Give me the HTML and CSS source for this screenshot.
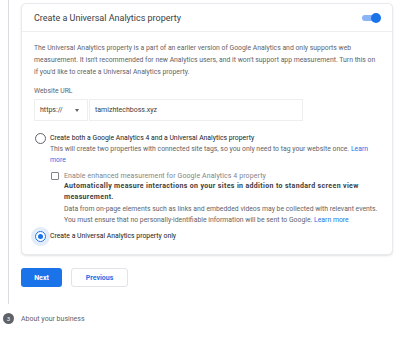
FILE: index.html
```html
<!DOCTYPE html>
<html>
<head>
<meta charset="utf-8">
<link rel="stylesheet" href="styles.css">
</head>
<body>
<div class="page">
  <div class="rail"><div class="line"></div></div>
  <div class="main">
    <div class="card">
      <div class="card-head">
        <span class="title">Create a Universal Analytics property</span>
        <span class="toggle"><span class="track"></span><span class="knob"></span></span>
      </div>
      <div class="card-body">
        <p class="intro">The Universal Analytics property is a part of an earlier version of Google Analytics and only supports web measurement. It isn't recommended for new Analytics users, and it won't support app measurement. Turn this on if you'd like to create a Universal Analytics property.</p>
        <div class="label">Website URL</div>
        <div class="url-row">
          <div class="select"><span>https://</span><span class="caret"></span></div>
          <div class="input">tamizhtechboss.xyz</div>
        </div>
        <div class="option first">
          <span class="radio"></span>
          <div class="opt-text">
            <div class="opt-title">Create both a Google Analytics 4 and a Universal Analytics property</div>
            <div class="opt-desc">This will create two properties with connected site tags, so you only need to tag your website once. <span class="link">Learn more</span></div>
            <div class="check-row">
              <span class="checkbox"></span>
              <span class="check-label">Enable enhanced measurement for Google Analytics 4 property</span>
            </div>
            <div class="sub">
              <div class="bold">Automatically measure interactions on your sites in addition to standard screen view measurement.</div>
              <div class="opt-desc">Data from on-page elements such as links and embedded videos may be collected with relevant events. You must ensure that no personally-identifiable information will be sent to Google. <span class="link">Learn more</span></div>
            </div>
          </div>
        </div>
        <div class="option second">
          <span class="radio checked"><span class="dot"></span></span>
          <div class="opt-title">Create a Universal Analytics property only</div>
        </div>
      </div>
    </div>
    <div class="actions">
      <button class="btn primary">Next</button>
      <button class="btn secondary">Previous</button>
    </div>
  </div>
</div>
<div class="step">
  <span class="num">3</span>
  <span class="step-label">About your business</span>
</div>
</body>
</html>
```
FILE: styles.css
```css
* { box-sizing: border-box; }
body {
  margin: 0;
  background: #fff;
  font-family: Roboto, "Liberation Sans", Arial, sans-serif;
  color: #5f6368;
  width: 400px;
  height: 338px;
  overflow: hidden;
}
.page {
  display: flex;
}
.rail {
  width: 21px;
  flex: none;
  display: flex;
  justify-content: center;
  padding-right: 4px;
}
.line {
  width: 1px;
  background: #dadce0;
  height: 304px;
}
.main {
  flex: 1;
  padding-right: 7px;
  padding-top: 3px;
}
.card {
  border: 1px solid #e8eaed;
  border-radius: 5px;
  box-shadow: 0 1px 2px rgba(60,64,67,0.15);
  background: #fff;
}
.card-head {
  height: 28px;
  display: flex;
  align-items: center;
  justify-content: space-between;
  padding: 0 11px 0 12px;
  border-bottom: 1px solid #eceef0;
}
.title {
  font-size: 9px;
  color: #3c4043;
}
.toggle {
  position: relative;
  width: 20px;
  height: 10px;
  display: inline-block;
}
.track {
  position: absolute;
  left: 1px;
  top: 2px;
  width: 16px;
  height: 6px;
  border-radius: 3px;
  background: #8ab4f8;
}
.knob {
  position: absolute;
  right: 0;
  top: 0;
  width: 10px;
  height: 10px;
  border-radius: 50%;
  background: #1a73e8;
}
.card-body {
  padding: 10px 12px 12px 12px;
}
.intro {
  margin: 0;
  font-size: 6.85px;
  line-height: 12px;
  color: #5f6368;
}
.label {
  margin-top: 8px;
  font-size: 6.85px;
  line-height: 10px;
  color: #5f6368;
}
.url-row {
  display: flex;
  margin-top: 3px;
  gap: 1px;
}
.select {
  width: 54px;
  height: 22px;
  border: 1px solid #eceef0;
  display: flex;
  align-items: center;
  justify-content: space-between;
  padding: 0 8px 0 5px;
  font-size: 7px;
  color: #3c4043;
}
.caret {
  width: 0;
  height: 0;
  border-left: 2.5px solid transparent;
  border-right: 2.5px solid transparent;
  border-top: 3px solid #5f6368;
}
.input {
  width: 214px;
  height: 22px;
  border: 1px solid #eceef0;
  display: flex;
  align-items: center;
  padding-left: 5px;
  font-size: 7px;
  color: #3c4043;
}
.option {
  display: flex;
  align-items: flex-start;
}
.option.first {
  margin-top: 12px;
}
.option.second {
  margin-top: 5px;
  align-items: center;
}
.radio {
  flex: none;
  width: 11px;
  height: 11px;
  border: 1.5px solid #5f6368;
  border-radius: 50%;
  margin-left: 1px;
  margin-right: 4px;
  display: flex;
  align-items: center;
  justify-content: center;
}
.radio.checked {
  border-color: #1a73e8;
  box-shadow: 0 0 0 4px #e3ecfb;
}
.dot {
  width: 5px;
  height: 5px;
  border-radius: 50%;
  background: #1a73e8;
}
.opt-title {
  font-size: 6.85px;
  line-height: 11px;
  color: #202124;
}
.opt-desc {
  font-size: 6.85px;
  line-height: 11px;
  color: #5f6368;
}
.link { color: #1a73e8; }
.check-row {
  display: flex;
  align-items: center;
  margin-top: 6px;
  margin-left: 1px;
}
.checkbox {
  width: 8px;
  height: 8px;
  border: 1px solid #80868b;
  border-radius: 1px;
  margin-right: 5px;
}
.check-label {
  font-size: 7px;
  letter-spacing: 0.1px;
  color: #80868b;
}
.sub {
  padding-left: 14px;
  margin-top: 1px;
}
.bold {
  font-size: 7px;
  font-weight: bold;
  letter-spacing: 0.35px;
  line-height: 11px;
  color: #3c4043;
  margin-bottom: 1px;
}
.actions {
  display: flex;
  gap: 9px;
  margin-top: 13px;
}
.btn {
  height: 19px;
  border-radius: 3px;
  font-family: Roboto, "Liberation Sans", Arial, sans-serif;
  font-size: 7px;
  font-weight: bold;
  padding: 0;
}
.primary {
  width: 41px;
  background: #1a73e8;
  color: #fff;
  border: none;
}
.secondary {
  width: 57px;
  background: #fff;
  color: #1a73e8;
  border: 1px solid #e0e3e7;
}
.step {
  display: flex;
  align-items: center;
  margin-top: 9px;
  padding-left: 3px;
}
.num {
  width: 11px;
  height: 11px;
  border-radius: 50%;
  background: #5f6368;
  color: #fff;
  font-size: 6px;
  display: flex;
  align-items: center;
  justify-content: center;
  margin-right: 7px;
}
.step-label {
  font-size: 7px;
  color: #5f6368;
}
```
